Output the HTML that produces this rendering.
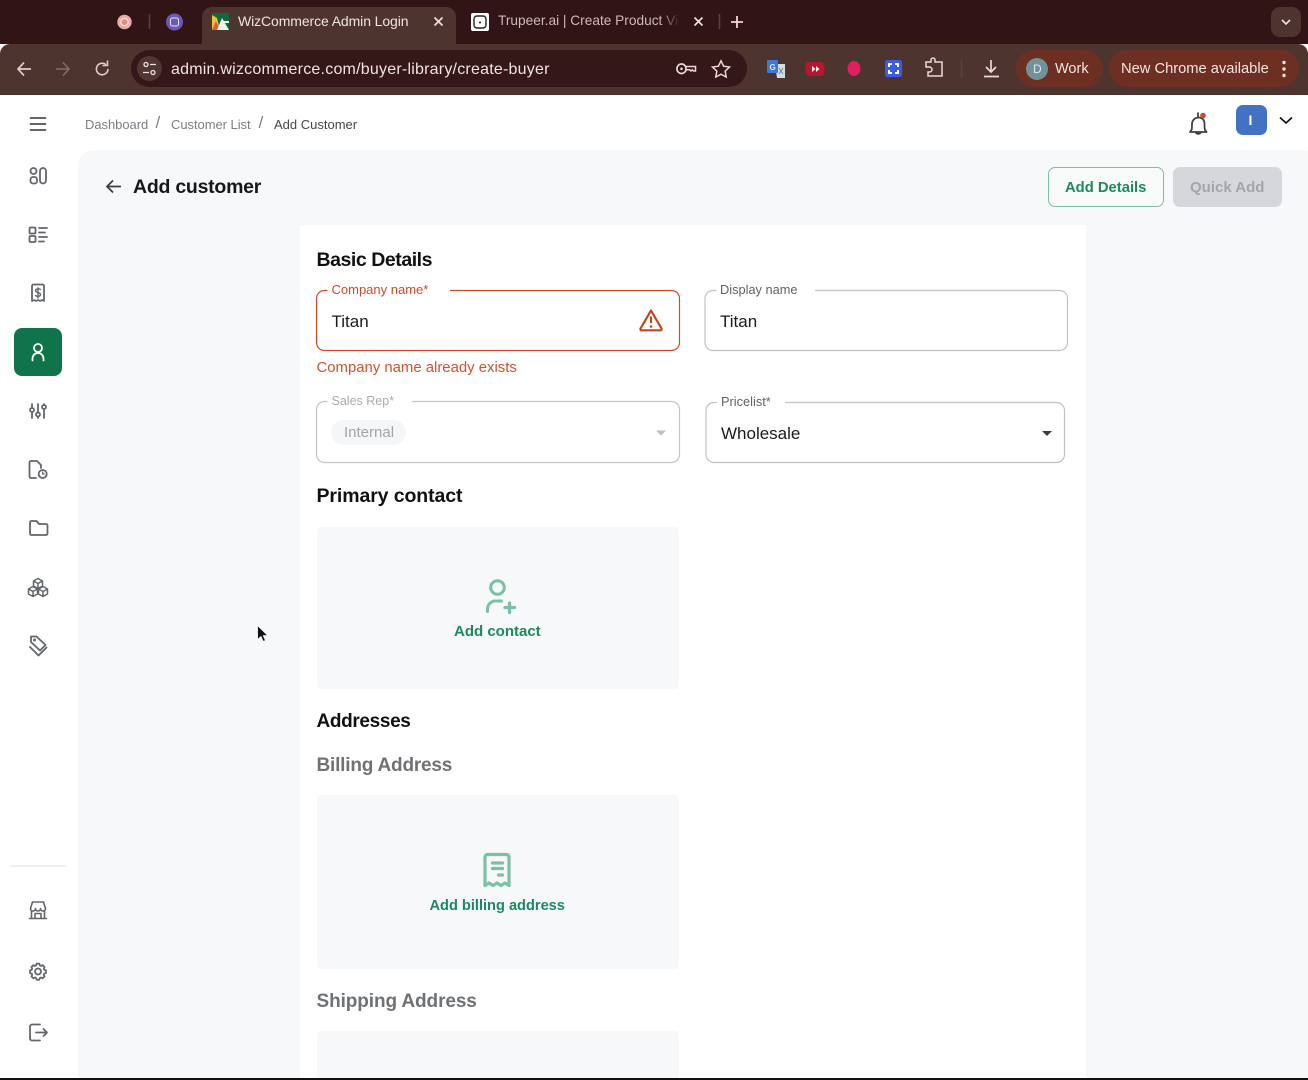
<!DOCTYPE html>
<html><head><meta charset="utf-8"><style>
html,body{margin:0;padding:0;width:1308px;height:1080px;overflow:hidden;background:#fff;font-family:"Liberation Sans",sans-serif}
.a{position:absolute;white-space:nowrap;line-height:1}
.b{position:absolute;box-sizing:border-box}
svg{position:absolute;overflow:visible;fill:none}
</style></head><body>
<!-- chrome -->
<div class="b" style="left:0;top:0;width:1308px;height:44px;background:#311416"></div>
<div class="b" style="left:0;top:44px;width:1308px;height:51px;background:#4e342f;border-radius:10px 10px 0 0"></div>
<div class="b" style="left:202px;top:7px;width:254px;height:40px;background:#4e342f;border-radius:10px 10px 0 0"></div>
<div class="b" style="left:131px;top:50px;width:616px;height:37px;background:#331719;border-radius:19px"></div>
<span class="a" style="left:498px;top:14px;width:182px;overflow:hidden;font-size:13.700px;color:#cdbab6">Trupeer.ai | Create Product Vi</span>
<div class="b" style="left:660px;top:10px;width:22px;height:24px;background:linear-gradient(90deg,rgba(49,20,22,0),#311416 90%)"></div>
<svg style="left:0;top:0" width="1308" height="95">
<circle cx="124.500" cy="22" r="7.200" fill="#eeaaa6"/><circle cx="124.500" cy="22" r="4.300" fill="#fbe3df"/><circle cx="124.500" cy="22" r="3" fill="#e48d88"/>
<path d="M149.500 14v15M719.500 14v15M961.500 60v18" stroke="#5b423e" stroke-width="1.500"/>
<circle cx="174.500" cy="22" r="8.500" fill="#6a5ab8"/><rect x="170.500" y="18" width="8" height="8" rx="2" stroke="#e8e4f8"/>
<rect x="212" y="13" width="17" height="17" fill="#11683e"/><path d="M212 30V15l5 3 3 12z" fill="#f1c232"/><path d="M212 30l4-9 4 9z" fill="#e2574c"/><path d="M217 30l5-12 7 12z" fill="#eef3ea"/><path d="M223 21h6v2h-6z" fill="#fff"/>
<path d="M434.500 17.500l8 8M442.500 17.500l-8 8M694.500 17.500l8 8M702.500 17.500l-8 8" stroke="#f1e4e0" stroke-width="1.600"/>
<rect x="471" y="13" width="18" height="18" rx="2" fill="#fff"/><rect x="474" y="16" width="12" height="12" rx="3" stroke="#222" stroke-width="1.400"/><circle cx="480" cy="22.500" r="1" fill="#222"/>
<path d="M737 16v12M731 22h12" stroke="#eadbd7" stroke-width="1.800"/>
<rect x="1271" y="7" width="30" height="30" rx="9" fill="#4e342f"/><path d="M1282 20l4 4 4-4" stroke="#efe3df" stroke-width="1.600"/>
<path d="M31 69H18M24 62.500L18 69l6 6.500" stroke="#ddcdc9" stroke-width="1.700"/>
<path d="M69 69H56M63 62.500L69 69l-6 6.500" stroke="#846e69" stroke-width="1.500"/>
<path d="M108 69a5.800 5.800 0 1 1-2-4.400M107.500 60.500v5h-5" stroke="#ddcdc9" stroke-width="1.600"/>
<circle cx="149.500" cy="68.500" r="12.500" fill="#513733"/><circle cx="146" cy="64.500" r="2" stroke="#eee2de" stroke-width="1.300"/><circle cx="153" cy="72.500" r="2" stroke="#eee2de" stroke-width="1.300"/><path d="M150 64.500h6M143 72.500h6" stroke="#eee2de" stroke-width="1.300"/>
<rect x="677" y="64" width="9" height="9.500" rx="4.500" stroke="#ead9d5" stroke-width="1.700"/><circle cx="681.500" cy="68.800" r="1.300" fill="#ead9d5"/><path d="M686 66.500h9.500v4.500h-2l-1.200-1.200-1.300 1.200-1.300-1.200-3.700 0" stroke="#ead9d5" stroke-width="1.500"/>
<path d="M721 60.800l2.600 5.400 5.900.8-4.300 4.100 1 5.900-5.200-2.800-5.200 2.800 1-5.900-4.300-4.100 5.900-.8z" stroke="#ead9d5" stroke-width="1.500"/>
<path d="M775 64h10v14h-8z" fill="#d5dde0"/><rect x="767" y="60" width="11" height="13" rx="1" fill="#3c78d8"/><text x="769.500" y="70" font-size="8" font-weight="700" fill="#dce8fa" font-family="Liberation Sans">G</text><path d="M779 68l4 6M783 68l-4 6" stroke="#6b8c9b"/>
<rect x="805.500" y="62" width="19" height="14" rx="4" fill="#b8162c"/><path d="M812 66l3.500 3-3.500 3zM816 66l3.500 3-3.500 3z" fill="#fff"/>
<ellipse cx="854" cy="68.500" rx="6.500" ry="7.500" fill="#df1f5f"/>
<rect x="885" y="60" width="17" height="17" rx="2.500" fill="#3b5ce8"/><path d="M889 67v-3h3M898 67v-3h-3M889 70v3h3M898 70v3h-3" stroke="#fff" stroke-width="2"/>
<path d="M926 62h5v-2a2 2 0 0 1 4 0v2h7v14h-14v-4h1.500a2.500 2.500 0 0 0 0-5H926z" stroke="#ead9d5" stroke-width="1.500"/>
<path d="M991 60v11M986 67l5 5 5-5M984 76.500h15" stroke="#ead9d5" stroke-width="1.700"/>
<rect x="1016" y="50" width="87" height="37" rx="18.500" fill="#6d2f22"/>
<rect x="1109" y="50" width="190" height="37" rx="18.500" fill="#6d2f22"/>
<circle cx="1037" cy="69" r="11" fill="#6f929b"/>
<circle cx="1284" cy="62.500" r="1.700" fill="#f3e5e0"/><circle cx="1284" cy="69" r="1.700" fill="#f3e5e0"/><circle cx="1284" cy="75.500" r="1.700" fill="#f3e5e0"/>
</svg>
<span class="a" style="left:238px;top:14px;font-size:14px;color:#efe4e0;letter-spacing:-.1px">WizCommerce Admin Login</span>
<span class="a" style="left:171px;top:62px;font-size:16px;color:#efe4e0;letter-spacing:.22px">admin.wizcommerce.com/buyer-library/create-buyer</span>
<span class="a" style="left:1033px;top:63px;font-size:12px;color:#dce6e8">D</span>
<span class="a" style="left:1055px;top:62px;font-size:14.500px;color:#f3e5e0">Work</span>
<span class="a" style="left:1121px;top:62px;font-size:14.700px;color:#f3e5e0">New Chrome available</span>

<!-- app -->
<div class="b" style="left:78px;top:150px;width:1240px;height:930px;background:#f7f8fa;border-radius:16px 16px 0 0"></div>
<div class="b" style="left:300px;top:225px;width:786px;height:855px;background:#fff"></div>
<div class="b" style="left:14px;top:328px;width:48px;height:48px;background:#10744b;border-radius:8px"></div>
<div class="b" style="left:10px;top:865px;width:56px;height:2px;background:#eeeff1"></div>
<svg style="left:0;top:0" width="80" height="1080" stroke="#63666b" stroke-width="1.800" stroke-linecap="round" stroke-linejoin="round">
<path d="M30.500 118h15M30.500 124h15M30.500 130h15" stroke="#4d5054"/>
<circle cx="33.500" cy="171" r="3"/><rect x="30.500" y="177" width="6.500" height="6.500" rx="2.500"/><rect x="40" y="168" width="6" height="15.500" rx="3"/>
<rect x="29.500" y="227.500" width="6" height="6" rx="1"/><rect x="29.500" y="236" width="6" height="6" rx="1"/><path d="M39 228h8M39 232.500h6M39 237h8M39 241.500h5"/>
<path d="M32 301v-15a1.500 1.500 0 0 1 1.500-1.500h9a1.500 1.500 0 0 1 1.500 1.500v15l-2-1-2 1-2-1-2 1-2-1z"/><path d="M40.500 289.500c-1-1-5-1-5 1.200s5 1.600 5 3.800-4 2.200-5 1M38 288v10" stroke-width="1.400"/>
<circle cx="38" cy="348" r="4" stroke="#fff"/><path d="M32.500 360.500v-2a5.500 5.500 0 0 1 11 0v2" stroke="#fff"/>
<path d="M32 404v3M32 413v5M38 404v8M38 417v1M44 404v1M44 410v8"/><circle cx="32" cy="410" r="2"/><circle cx="38" cy="414.500" r="2"/><circle cx="44" cy="407" r="2"/>
<path d="M36 478h-5a1.500 1.500 0 0 1-1.500-1.500v-14a1.500 1.500 0 0 1 1.500-1.500h6l4 4v3"/><circle cx="42.700" cy="474" r="4"/><path d="M42.700 472v2h1.500" stroke-width="1.300"/>
<path d="M30 522.500a1.500 1.500 0 0 1 1.500-1.500h5l2.500 3h7a1.500 1.500 0 0 1 1.500 1.500v8a1.500 1.500 0 0 1-1.500 1.500h-14.500a1.500 1.500 0 0 1-1.500-1.500z"/>
<g stroke-width="1.500">
<path d="M38 578.500l4.500 2.500v5l-4.500 2.500-4.500-2.500v-5zM33.500 581l4.500 2.500 4.500-2.500M38 583.500v5"/>
<path d="M33 586.500l4.500 2.500v5l-4.500 2.500-4.500-2.500v-5zM28.500 589l4.500 2.500 4.500-2.500M33 591.500v5"/>
<path d="M43 586.500l4.500 2.500v5l-4.500 2.500-4.500-2.500v-5zM38.500 589l4.500 2.500 4.500-2.500M43 591.500v5"/>
</g>
<path d="M31 636.500h5.500l9 8.500-5.500 5.500-9-8.500zM30 647l8.500 8.500 8-8"/><circle cx="34.500" cy="640" r=".6"/>
<path d="M30.500 908.500l2-6.500h11l2 6.500a2.500 2.500 0 0 1-5 0 2.500 2.500 0 0 1-5 0 2.500 2.500 0 0 1-5 0zM31.500 911v7.500h13V911M29.500 918.500h17M35 918.500v-5h6v5" stroke-width="1.600"/>
<g transform="translate(38 971.500) scale(.68) translate(-38 -972.500)" stroke-width="2.600"><path d="M36 963.500h4l.7 2.400 2 .9 2.200-1.200 2.800 2.800-1.200 2.200.9 2 2.400.7v4l-2.400.7-.9 2 1.200 2.200-2.800 2.800-2.200-1.200-2 .9-.7 2.400h-4l-.7-2.400-2-.9-2.200 1.200-2.800-2.800 1.200-2.200-.9-2-2.400-.7v-4l2.400-.7.900-2-1.200-2.200 2.800-2.800 2.200 1.200 2-.9z" transform="translate(0 -2.500)"/></g><circle cx="38" cy="971.500" r="3"/>
<path d="M40 1024.500h-8a2 2 0 0 0-2 2v12a2 2 0 0 0 2 2h8M36 1032.500h11M43.500 1029l3.500 3.500-3.500 3.500"/>
</svg>

<span class="a" style="left:85px;top:117.500px;font-size:13px;color:#7b7f84;letter-spacing:-.05px">Dashboard</span>
<span class="a" style="left:155.500px;top:114px;font-size:17px;color:#7b7f84">/</span>
<span class="a" style="left:171px;top:117.500px;font-size:13px;color:#7b7f84;letter-spacing:-.05px">Customer List</span>
<span class="a" style="left:258.500px;top:114px;font-size:17px;color:#7b7f84">/</span>
<span class="a" style="left:274px;top:117.500px;font-size:13px;color:#43464a">Add Customer</span>

<svg style="left:1178px;top:105px" width="128" height="40">
<path d="M12 27c2-2 2-3 2-8a6.500 6.500 0 0 1 6-6.500c5 0 6.500 3 6.500 6.500 0 5 0 6 2 8zM17.500 27a3 3 0 0 0 5.500 0M20 7.500v5" stroke="#3f4246" stroke-width="1.800" stroke-linejoin="round"/>
<circle cx="25" cy="10.500" r="2.800" fill="#d4461c"/>
<path d="M102 12.500l6 5.500 6-5.500" stroke="#111" stroke-width="1.700"/>
</svg>
<div class="b" style="left:1236px;top:105px;width:31px;height:30px;background:#4372c4;border-radius:7px"></div>
<span class="a" style="left:1248.500px;top:113px;font-size:14px;color:#fff;font-weight:700">I</span>

<svg style="left:105px;top:178px" width="20" height="18"><path d="M16 8.500H2M8 2.500L2 8.500l6 6" stroke="#3a3d40" stroke-width="1.700"/></svg>
<span class="a" style="left:133px;top:178px;font-size:19.500px;font-weight:700;color:#161719;letter-spacing:-.25px">Add customer</span>
<div class="b" style="left:1048px;top:167px;width:116px;height:40px;border:1px solid #80bda6;border-radius:7px;background:#f9fbfb"></div>
<span class="a" style="left:1065px;top:181px;font-size:14.800px;font-weight:700;color:#1c8a5e">Add Details</span>
<div class="b" style="left:1173px;top:167px;width:109px;height:40px;border-radius:7px;background:#d5d7da"></div>
<span class="a" style="left:1190px;top:180px;font-size:15px;font-weight:700;color:#a3a6a9">Quick Add</span>

<span class="a" style="left:316.500px;top:250.500px;font-size:19.500px;font-weight:700;color:#111;letter-spacing:-.45px">Basic Details</span>

<!-- fields -->
<svg style="left:0;top:0" width="1308" height="1080">
<path d="M327.500 290.500h-3a8 8 0 0 0-8 8v44a8 8 0 0 0 8 8h347a8 8 0 0 0 8-8v-44a8 8 0 0 0-8-8H450" stroke="#cf4a28" stroke-width="1.200"/>
<path d="M716.500 290.500h-3.500a8 8 0 0 0-8 8v44a8 8 0 0 0 8 8h346.500a8 8 0 0 0 8-8v-44a8 8 0 0 0-8-8H815" stroke="#bfc1c4" stroke-width="1.200"/>
<path d="M327.500 401.500h-3a8 8 0 0 0-8 8v45a8 8 0 0 0 8 8h347a8 8 0 0 0 8-8v-45a8 8 0 0 0-8-8H412" stroke="#c2c4c7" stroke-width="1.200"/>
<path d="M717 402.500h-3a8 8 0 0 0-8 8v44a8 8 0 0 0 8 8h342.500a8 8 0 0 0 8-8v-44a8 8 0 0 0-8-8H785" stroke="#bfc1c4" stroke-width="1.200"/>
<path d="M651 310.500l10.500 18a1.200 1.200 0 0 1-1 1.800h-19a1.200 1.200 0 0 1-1-1.800z" stroke="#c6431f" stroke-width="2.200" stroke-linejoin="round"/>
<path d="M651 316.500v6.500" stroke="#c6431f" stroke-width="2.200"/><circle cx="651" cy="326.500" r="1.300" fill="#c6431f"/>
<path d="M656 430.500h10l-5 5z" fill="#bcbec1"/>
<path d="M1042 431h10l-5 5z" fill="#3a3d40"/>
</svg>
<span class="a" style="left:331.500px;top:283px;font-size:13px;color:#cf4a28">Company name*</span>
<span class="a" style="left:331.500px;top:313px;font-size:17px;color:#1a1b1d">Titan</span>
<span class="a" style="left:720px;top:284px;font-size:12.800px;color:#5f6266">Display name</span>
<span class="a" style="left:720px;top:313px;font-size:17px;color:#1a1b1d">Titan</span>
<span class="a" style="left:316.500px;top:360.500px;font-size:14.900px;color:#cf5331">Company name already exists</span>
<span class="a" style="left:331.500px;top:395px;font-size:12.500px;color:#a9abae">Sales Rep*</span>
<div class="b" style="left:331px;top:420px;width:75px;height:25px;background:#f5f6f7;border-radius:13px"></div>
<span class="a" style="left:344px;top:425px;font-size:15px;color:#a2a4a7">Internal</span>
<span class="a" style="left:721px;top:396px;font-size:12.800px;color:#5f6266">Pricelist*</span>
<span class="a" style="left:721px;top:424.500px;font-size:17px;color:#1a1b1d">Wholesale</span>

<span class="a" style="left:316.500px;top:487px;font-size:19.500px;font-weight:700;color:#111;letter-spacing:-.1px">Primary contact</span>
<div class="b" style="left:317px;top:527px;width:362px;height:162px;background:#f7f8fa;border-radius:4px"></div>
<svg style="left:470px;top:570px" width="60" height="50" stroke="#7cc0a6" stroke-width="3" stroke-linecap="round"><circle cx="27.500" cy="17.500" r="6.800"/><path d="M17.500 41.500v-2.500a8 8 0 0 1 8-8h6"/><path d="M35 37.500h9.500M39.500 33v9.500" stroke-width="3.300"/></svg>
<span class="a" style="left:454px;top:624px;font-size:15px;font-weight:700;color:#1c8a5e">Add contact</span>

<span class="a" style="left:316.500px;top:712px;font-size:19px;font-weight:700;color:#111;letter-spacing:-.35px">Addresses</span>
<span class="a" style="left:316.500px;top:756px;font-size:19px;font-weight:700;color:#6f7275;letter-spacing:-.2px">Billing Address</span>
<div class="b" style="left:317px;top:795px;width:362px;height:174px;background:#f7f8fa;border-radius:4px"></div>
<svg style="left:480px;top:850px" width="36" height="40" stroke="#7cc0a6" stroke-width="3.200" stroke-linecap="round" stroke-linejoin="round"><path d="M5 35.500V7a2.500 2.500 0 0 1 2.500-2.500h19A2.500 2.500 0 0 1 29 7v28.500l-4-2.500-4 2.500-4-2.500-4 2.500-4-2.500z"/><path d="M12.500 13h10M12.500 18.500h10M18.500 25h4"/></svg>
<span class="a" style="left:429.500px;top:899px;font-size:14.600px;font-weight:700;color:#1c8a5e">Add billing address</span>
<span class="a" style="left:316.500px;top:992px;font-size:19px;font-weight:700;color:#6f7275;letter-spacing:-.1px">Shipping Address</span>
<div class="b" style="left:317px;top:1031px;width:362px;height:49px;background:#f7f8fa;border-radius:4px 4px 0 0"></div>

<svg style="left:256px;top:624px" width="14" height="20"><path d="M1.500 1.500v14l3.500-3 2.200 5 2.300-1-2.200-4.800h4.700z" fill="#111" stroke="#fff" stroke-width=".8"/></svg>
<div class="b" style="left:0;top:1078px;width:1308px;height:2px;background:#111"></div>
</body></html>
